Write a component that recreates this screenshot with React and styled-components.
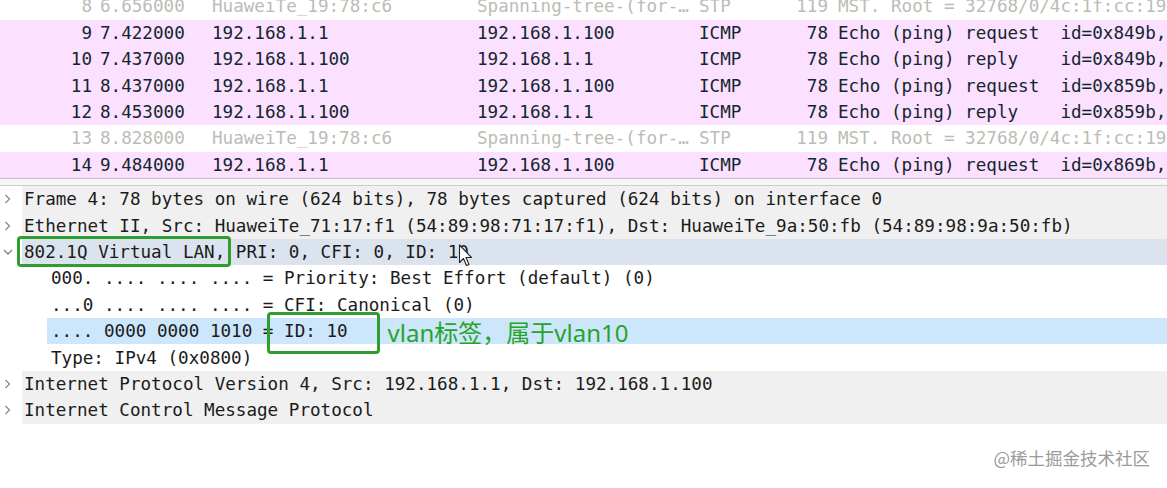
import React from 'react';
import styled, { createGlobalStyle } from 'styled-components';

const GlobalStyle = createGlobalStyle`
  html, body {
    margin: 0;
    padding: 0;
    background: #ffffff;
    overflow: hidden;
  }
`;

const Page = styled.div`
  width: 1167px;
  height: 488px;
  background: #fff;
  font-family: "DejaVu Sans Mono", "Liberation Mono", monospace;
  font-size: 17.6px;
  display: flex;
  flex-direction: column;
  overflow: hidden;
`;

// Packet list (scrolled, first row is cut off at the top)
const PacketList = styled.div`
  height: 178px;
  display: flex;
  flex-direction: column;
  justify-content: flex-end;
  overflow: hidden;
  border-bottom: 1px solid #c9bcc9;
  flex-shrink: 0;
`;

const PacketRow = styled.div`
  height: 26.4px;
  flex-shrink: 0;
  display: grid;
  grid-template-columns: 92px 120px 265px 222px 91px 38px 1fr;
  align-items: center;
  white-space: pre;
  background: ${p => (p.$kind === 'stp' ? '#ffffff' : '#fce0ff')};
  color: ${p => (p.$kind === 'stp' ? '#babdb6' : '#12272e')};
`;

const Cell = styled.span`
  overflow: hidden;
  text-align: ${p => (p.$right ? 'right' : 'left')};
  padding-left: ${p => p.$pad || 0}px;
`;

const Splitter = styled.div`
  height: 6px;
  flex-shrink: 0;
  background: #f6f6f6;
  border-bottom: 1px solid #cdcdcd;
`;

// Packet details tree
const Details = styled.div`
  display: flex;
  flex-direction: column;
  color: #1b1b1b;
`;

const TreeRow = styled.div`
  height: 26.4px;
  display: flex;
  align-items: stretch;
  white-space: nowrap;
  position: relative;
`;

const Toggle = styled.span`
  width: ${p => p.$indent}px;
  flex-shrink: 0;
  display: flex;
  align-items: center;
  padding-left: 3px;
  box-sizing: border-box;
`;

const Label = styled.span`
  flex: 1;
  display: flex;
  align-items: center;
  padding-left: ${p => p.$pad || 2}px;
  background: ${p => p.$bg || 'transparent'};
`;

const Marked = styled.span`
  position: relative;
  &::after {
    content: '';
    position: absolute;
    left: ${p => p.$l}px;
    right: ${p => p.$r}px;
    top: ${p => p.$t}px;
    bottom: ${p => p.$b}px;
    border: 3px solid #2f9e2f;
    border-radius: 4px;
    pointer-events: none;
  }
`;

const Note = styled.span`
  margin-left: 40px;
  font-family: "Noto Sans", "Noto Sans CJK SC", sans-serif;
  font-size: 24px;
  color: #28a428;
`;

const Cursor = styled.svg`
  position: absolute;
  left: 458px;
  top: 5px;
`;

const Footer = styled.div`
  flex: 1;
  display: flex;
  justify-content: flex-end;
  align-items: center;
  padding: 4px 17px 0 0;
  font-family: "Noto Sans CJK SC", "Noto Sans", sans-serif;
  font-size: 17.5px;
  color: #9b9b9b;
`;

const Chevron = ({ open }) => (
  <svg width="10" height="12" viewBox="0 0 10 12">
    {open ? (
      <path d="M1 4 L5 8 L9 4" fill="none" stroke="#7d7d7d" strokeWidth="1.3" />
    ) : (
      <path d="M2.5 2 L6.5 6 L2.5 10" fill="none" stroke="#8c8c8c" strokeWidth="1.3" />
    )}
  </svg>
);

const packets = [
  { no: 8, time: '6.656000', src: 'HuaweiTe_19:78:c6', dst: 'Spanning-tree-(for-…', proto: 'STP', len: 119, info: 'MST. Root = 32768/0/4c:1f:cc:19:78:c6  Cost = 0  Port = 0x8001', kind: 'stp' },
  { no: 9, time: '7.422000', src: '192.168.1.1', dst: '192.168.1.100', proto: 'ICMP', len: 78, info: 'Echo (ping) request  id=0x849b, seq=1/256, ttl=128 (reply in 10)' },
  { no: 10, time: '7.437000', src: '192.168.1.100', dst: '192.168.1.1', proto: 'ICMP', len: 78, info: 'Echo (ping) reply    id=0x849b, seq=1/256, ttl=128 (request in 9)' },
  { no: 11, time: '8.437000', src: '192.168.1.1', dst: '192.168.1.100', proto: 'ICMP', len: 78, info: 'Echo (ping) request  id=0x859b, seq=2/512, ttl=128 (reply in 12)' },
  { no: 12, time: '8.453000', src: '192.168.1.100', dst: '192.168.1.1', proto: 'ICMP', len: 78, info: 'Echo (ping) reply    id=0x859b, seq=2/512, ttl=128 (request in 11)' },
  { no: 13, time: '8.828000', src: 'HuaweiTe_19:78:c6', dst: 'Spanning-tree-(for-…', proto: 'STP', len: 119, info: 'MST. Root = 32768/0/4c:1f:cc:19:78:c6  Cost = 0  Port = 0x8001', kind: 'stp' },
  { no: 14, time: '9.484000', src: '192.168.1.1', dst: '192.168.1.100', proto: 'ICMP', len: 78, info: 'Echo (ping) request  id=0x869b, seq=3/768, ttl=128 (reply in 15)' },
];

const GRAY = '#f0f0f0';

export default function App() {
  return (
    <>
      <GlobalStyle />
      <Page>
        <PacketList>
          {packets.map(p => (
            <PacketRow key={p.no} $kind={p.kind}>
              <Cell $right>{p.no}</Cell>
              <Cell $pad={8}>{p.time}</Cell>
              <Cell>{p.src}</Cell>
              <Cell>{p.dst}</Cell>
              <Cell>{p.proto}</Cell>
              <Cell $right>{p.len}</Cell>
              <Cell $pad={10}>{p.info}</Cell>
            </PacketRow>
          ))}
        </PacketList>
        <Splitter />
        <Details>
          <TreeRow>
            <Toggle $indent={22}><Chevron /></Toggle>
            <Label $bg={GRAY}>Frame 4: 78 bytes on wire (624 bits), 78 bytes captured (624 bits) on interface 0</Label>
          </TreeRow>
          <TreeRow>
            <Toggle $indent={22}><Chevron /></Toggle>
            <Label $bg={GRAY}>Ethernet II, Src: HuaweiTe_71:17:f1 (54:89:98:71:17:f1), Dst: HuaweiTe_9a:50:fb (54:89:98:9a:50:fb)</Label>
          </TreeRow>
          <TreeRow>
            <Toggle $indent={22}><Chevron open /></Toggle>
            <Label $bg="#dbe4ee">
              <Marked $l={-7} $r={-6} $t={-6} $b={-5}>802.1Q Virtual LAN,</Marked>
              &nbsp;PRI: 0, CFI: 0, ID: 10
            </Label>
            <Cursor width="16" height="24" viewBox="0 0 16 24">
              <path d="M1.5 1 L1.5 18.5 L5.5 14.5 L8.5 21.5 L11 20.5 L8 13.5 L13.5 13.5 Z" fill="#ffffff" stroke="#222" strokeWidth="1.1" strokeLinejoin="round" />
            </Cursor>
          </TreeRow>
          <TreeRow>
            <Toggle $indent={47} />
            <Label $pad={4}>000. .... .... .... = Priority: Best Effort (default) (0)</Label>
          </TreeRow>
          <TreeRow>
            <Toggle $indent={47} />
            <Label $pad={4}>...0 .... .... .... = CFI: Canonical (0)</Label>
          </TreeRow>
          <TreeRow>
            <Toggle $indent={47} />
            <Label $pad={4} $bg="#cce6fb">
              .... 0000 0000 1010 =&nbsp;
              <Marked $l={-17} $r={-32} $t={-9} $b={-13}>ID: 10</Marked>
              <Note>vlan标签，属于vlan10</Note>
            </Label>
          </TreeRow>
          <TreeRow>
            <Toggle $indent={47} />
            <Label $pad={4}>Type: IPv4 (0x0800)</Label>
          </TreeRow>
          <TreeRow>
            <Toggle $indent={22}><Chevron /></Toggle>
            <Label $bg={GRAY}>Internet Protocol Version 4, Src: 192.168.1.1, Dst: 192.168.1.100</Label>
          </TreeRow>
          <TreeRow>
            <Toggle $indent={22}><Chevron /></Toggle>
            <Label $bg={GRAY}>Internet Control Message Protocol</Label>
          </TreeRow>
        </Details>
        <Footer>@稀土掘金技术社区</Footer>
      </Page>
    </>
  );
}
